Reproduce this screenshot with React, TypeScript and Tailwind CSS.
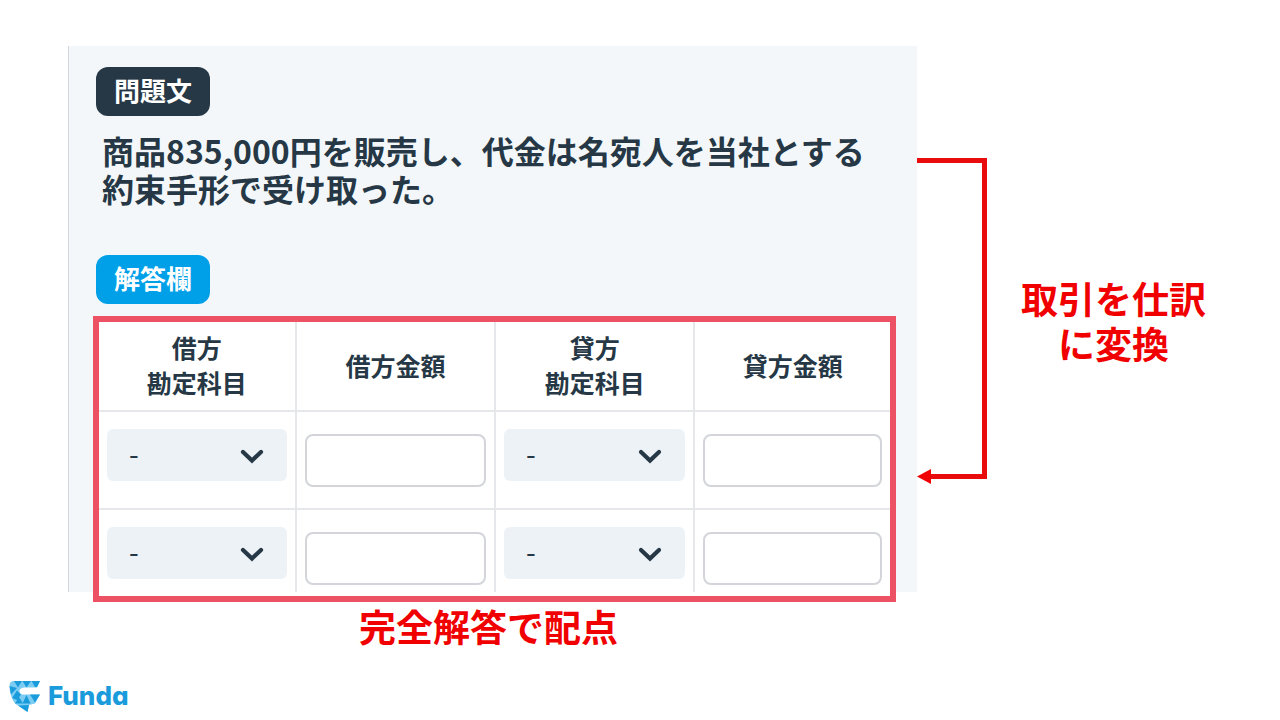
const accountOptions = ["-", "受取手形", "売掛金", "現金", "売上"];

function Chevron() {
  return (
    <svg viewBox="0 0 24 16" className="pointer-events-none absolute right-[23px] top-[19px] h-4 w-6" fill="none">
      <path d="M3 4 L12 12.5 L21 4" stroke="#263845" strokeWidth="4.2" strokeLinecap="round" />
    </svg>
  );
}

function AccountSelect({ label }: { label: string }) {
  return (
    <div className="relative">
      <select
        aria-label={label}
        className="block h-[52px] w-full appearance-none rounded-md bg-[#edf2f7] pb-1 pl-[22px] text-[28px] leading-[48px] text-[#263845]"
      >
        {accountOptions.map((name) => (
          <option key={name}>{name}</option>
        ))}
      </select>
      <Chevron />
    </div>
  );
}

function AmountInput({ label }: { label: string }) {
  return (
    <input
      type="text"
      aria-label={label}
      className="mt-[5px] block h-[53px] w-full rounded-lg border-2 border-[#d3d5da] bg-white px-3 text-2xl"
    />
  );
}

function Badge({ text, className }: { text: string; className: string }) {
  return (
    <h2 className={`flex h-[49px] w-[114px] items-center justify-center rounded-xl pb-[5px] text-[26px] font-bold text-white ${className}`}>
      {text}
    </h2>
  );
}

function Logo() {
  return (
    <svg viewBox="0 0 32 32" className="size-8 shrink-0">
      <path
        d="M4 1H31L28 7.500H15Q10.500 8 10.500 11Q10.500 14.500 14 14.500H31L26 23.500L20 25L18.500 32L6 23.500Q0.500 16 0.500 6Q0.500 1.500 4 1Z"
        fill="#7dcdf3"
      />
      <path
        d="M5 1H13L9 7.500ZM13.500 1H22L17.500 7.500ZM22.500 1H31L28 7H26ZM0.500 6L8 8L2 14.500ZM3 18L8 10.500L12 14.500L8 20ZM6 23.500L10 17L14 23.500ZM13.500 23.500L17.500 15L21.500 23.500ZM21 14.500H31L26 22.500ZM9 25.500L20 25L18.500 32Z"
        fill="#1a9bdb"
      />
    </svg>
  );
}

export default function App() {
  return (
    <main className="flex min-h-screen flex-col bg-white font-['Noto_Sans_CJK_JP','Noto_Sans',sans-serif]">
      <div className="grid grid-cols-[849fr_363fr] pl-[68px] pt-[46px]">
        <section className="border-l border-[#d3d7db] bg-[#f3f7fa] pl-[24px] pr-[21px] pt-[21px]">
          <Badge text="問題文" className="ml-[3px] bg-[#263845]" />
          <p className="ml-[9px] mt-[15px] text-[32px] font-bold leading-[38px] text-[#263845]">
            商品835,000円を販売し、代金は名宛人を当社とする
            <br />
            約束手形で受け取った。
          </p>
          <Badge text="解答欄" className="ml-[3px] mt-[48px] bg-[#00a0e9]" />
          <div className="-mb-[10px] mt-3 border-6 border-[#ec5164] bg-white pb-1">
            <table className="w-full table-fixed border-separate border-spacing-0 text-[#263845]">
              <colgroup>
                <col className="w-[25%]" />
                <col className="w-[25.2%]" />
                <col className="w-[25.2%]" />
                <col />
              </colgroup>
              <thead>
                <tr className="h-[90px] text-[25px] leading-[35px] *:border-b-2 *:border-r-2 *:border-[#e5e7eb] *:p-0 *:pb-[2px] *:last:border-r-0">
                  <th scope="col">借方<br />勘定科目</th>
                  <th scope="col">借方金額</th>
                  <th scope="col">貸方<br />勘定科目</th>
                  <th scope="col">貸方金額</th>
                </tr>
              </thead>
              <tbody>
                {[1, 2].map((row) => (
                  <tr
                    key={row}
                    className="h-[98px] *:border-b-2 *:border-r-2 *:border-[#e5e7eb] *:px-2 *:pt-[17px] *:align-top last:h-[82px] last:*:border-b-0 *:last:border-r-0"
                  >
                    <td><AccountSelect label={`借方勘定科目 ${row}`} /></td>
                    <td><AmountInput label={`借方金額 ${row}`} /></td>
                    <td><AccountSelect label={`貸方勘定科目 ${row}`} /></td>
                    <td><AmountInput label={`貸方金額 ${row}`} /></td>
                  </tr>
                ))}
              </tbody>
            </table>
          </div>
        </section>
        <aside className="flex items-start pt-[111px] text-[37px] font-bold leading-[45px] text-[#f00000]">
          <svg viewBox="0 0 70 328" className="h-[328px] w-[70px] shrink-0" fill="none">
            <path d="M0 3.5H67.5V319.5H12" stroke="#e80c0c" strokeWidth="5" />
            <path d="M0 319.5L14 312V327Z" fill="#f00000" />
          </svg>
          <p className="ml-[34px] mt-[119px] whitespace-nowrap text-center">
            取引を仕訳
            <br />
            に変換
          </p>
        </aside>
      </div>
      <div className="grid grid-cols-[849fr_363fr] pl-[68px] pt-3">
        <p className="pr-2 text-center text-[37px] font-bold leading-[45px] text-[#f00000]">完全解答で配点</p>
      </div>
      <footer className="mt-auto flex items-center gap-[7px] pb-2 pl-[9px]">
        <Logo />
        <span className="font-['Inter',sans-serif] text-[26px] font-extrabold leading-8 text-[#1a9bdb] [font-feature-settings:'cv11']">Funda</span>
      </footer>
    </main>
  );
}
